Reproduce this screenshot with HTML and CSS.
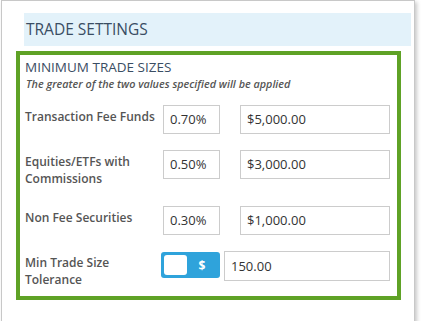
FILE: index.html
```html
<!DOCTYPE html>
<html>
<head>
<meta charset="utf-8">
<link rel="stylesheet" href="styles.css">
</head>
<body>
<div class="card">
  <div class="band">TRADE SETTINGS</div>
  <div class="box">
    <div class="title">MINIMUM TRADE SIZES</div>
    <div class="note">The greater of the two values specified will be applied</div>
    <div class="row">
      <div class="label">Transaction Fee Funds</div>
      <div class="inp pct">0.70%</div>
      <div class="inp amt">$5,000.00</div>
    </div>
    <div class="row">
      <div class="label">Equities/ETFs with Commissions</div>
      <div class="inp pct">0.50%</div>
      <div class="inp amt">$3,000.00</div>
    </div>
    <div class="row">
      <div class="label">Non Fee Securities</div>
      <div class="inp pct">0.30%</div>
      <div class="inp amt">$1,000.00</div>
    </div>
    <div class="row last">
      <div class="label">Min Trade Size Tolerance</div>
      <div class="toggle"><span class="knob"></span><span class="sym">$</span></div>
      <div class="inp tol">150.00</div>
    </div>
  </div>
</div>
</body>
</html>
```
FILE: styles.css
```css
html, body { margin: 0; padding: 0; background: #fff; }
body { font-family: "Open Sans", "Liberation Sans", sans-serif; }
.card {
  margin: 0 0 0 1px;
  width: 412px;
  height: 309px;
  border: 1px solid #c8c8c8;
  box-shadow: 2px 2px 4px rgba(0,0,0,0.22);
  padding-top: 12px;
}
.band {
  margin: 0 3px 0 22px;
  height: 33px;
  background: #e3f2fa;
  color: #3a4d63;
  font-size: 15.5px;
  line-height: 33px;
  padding-left: 2px;
}
.box {
  margin: 5px 13px 0 14px;
  height: 238px;
  border: 4px solid #5fa226;
  padding: 3px 0 0 5px;
}
.title {
  color: #3a4d63;
  font-size: 13.5px;
  line-height: 18px;
}
.note {
  color: #555;
  font-size: 10.8px;
  font-style: italic;
  font-weight: 600;
  line-height: 14px;
  margin: 1px 0 14px 1px;
}
.row {
  display: flex;
  align-items: flex-start;
  margin-bottom: 16px;
}
.row.last { margin-bottom: 0; }
.label {
  width: 138px;
  color: #555;
  font-size: 12px;
  font-weight: 600;
  line-height: 17px;
  padding: 3px 0;
}
.inp {
  box-sizing: border-box;
  height: 29px;
  border: 1px solid #ccc;
  color: #333;
  font-size: 13px;
  line-height: 27px;
  padding-left: 6px;
}
.pct { width: 57px; margin-right: 20px; }
.amt { width: 150px; }
.toggle {
  box-sizing: border-box;
  width: 59px;
  height: 26px;
  margin: 1px 4px 0 -2px;
  background: #2fa3db;
  border-radius: 3px;
  padding: 3px;
  display: flex;
  align-items: center;
}
.knob {
  width: 23px;
  height: 20px;
  background: #fff;
  border-radius: 3px;
}
.sym {
  flex: 1;
  text-align: center;
  color: #fff;
  font-weight: 700;
  font-size: 12px;
}
.tol { width: 166px; height: 30px; line-height: 28px; }
```
